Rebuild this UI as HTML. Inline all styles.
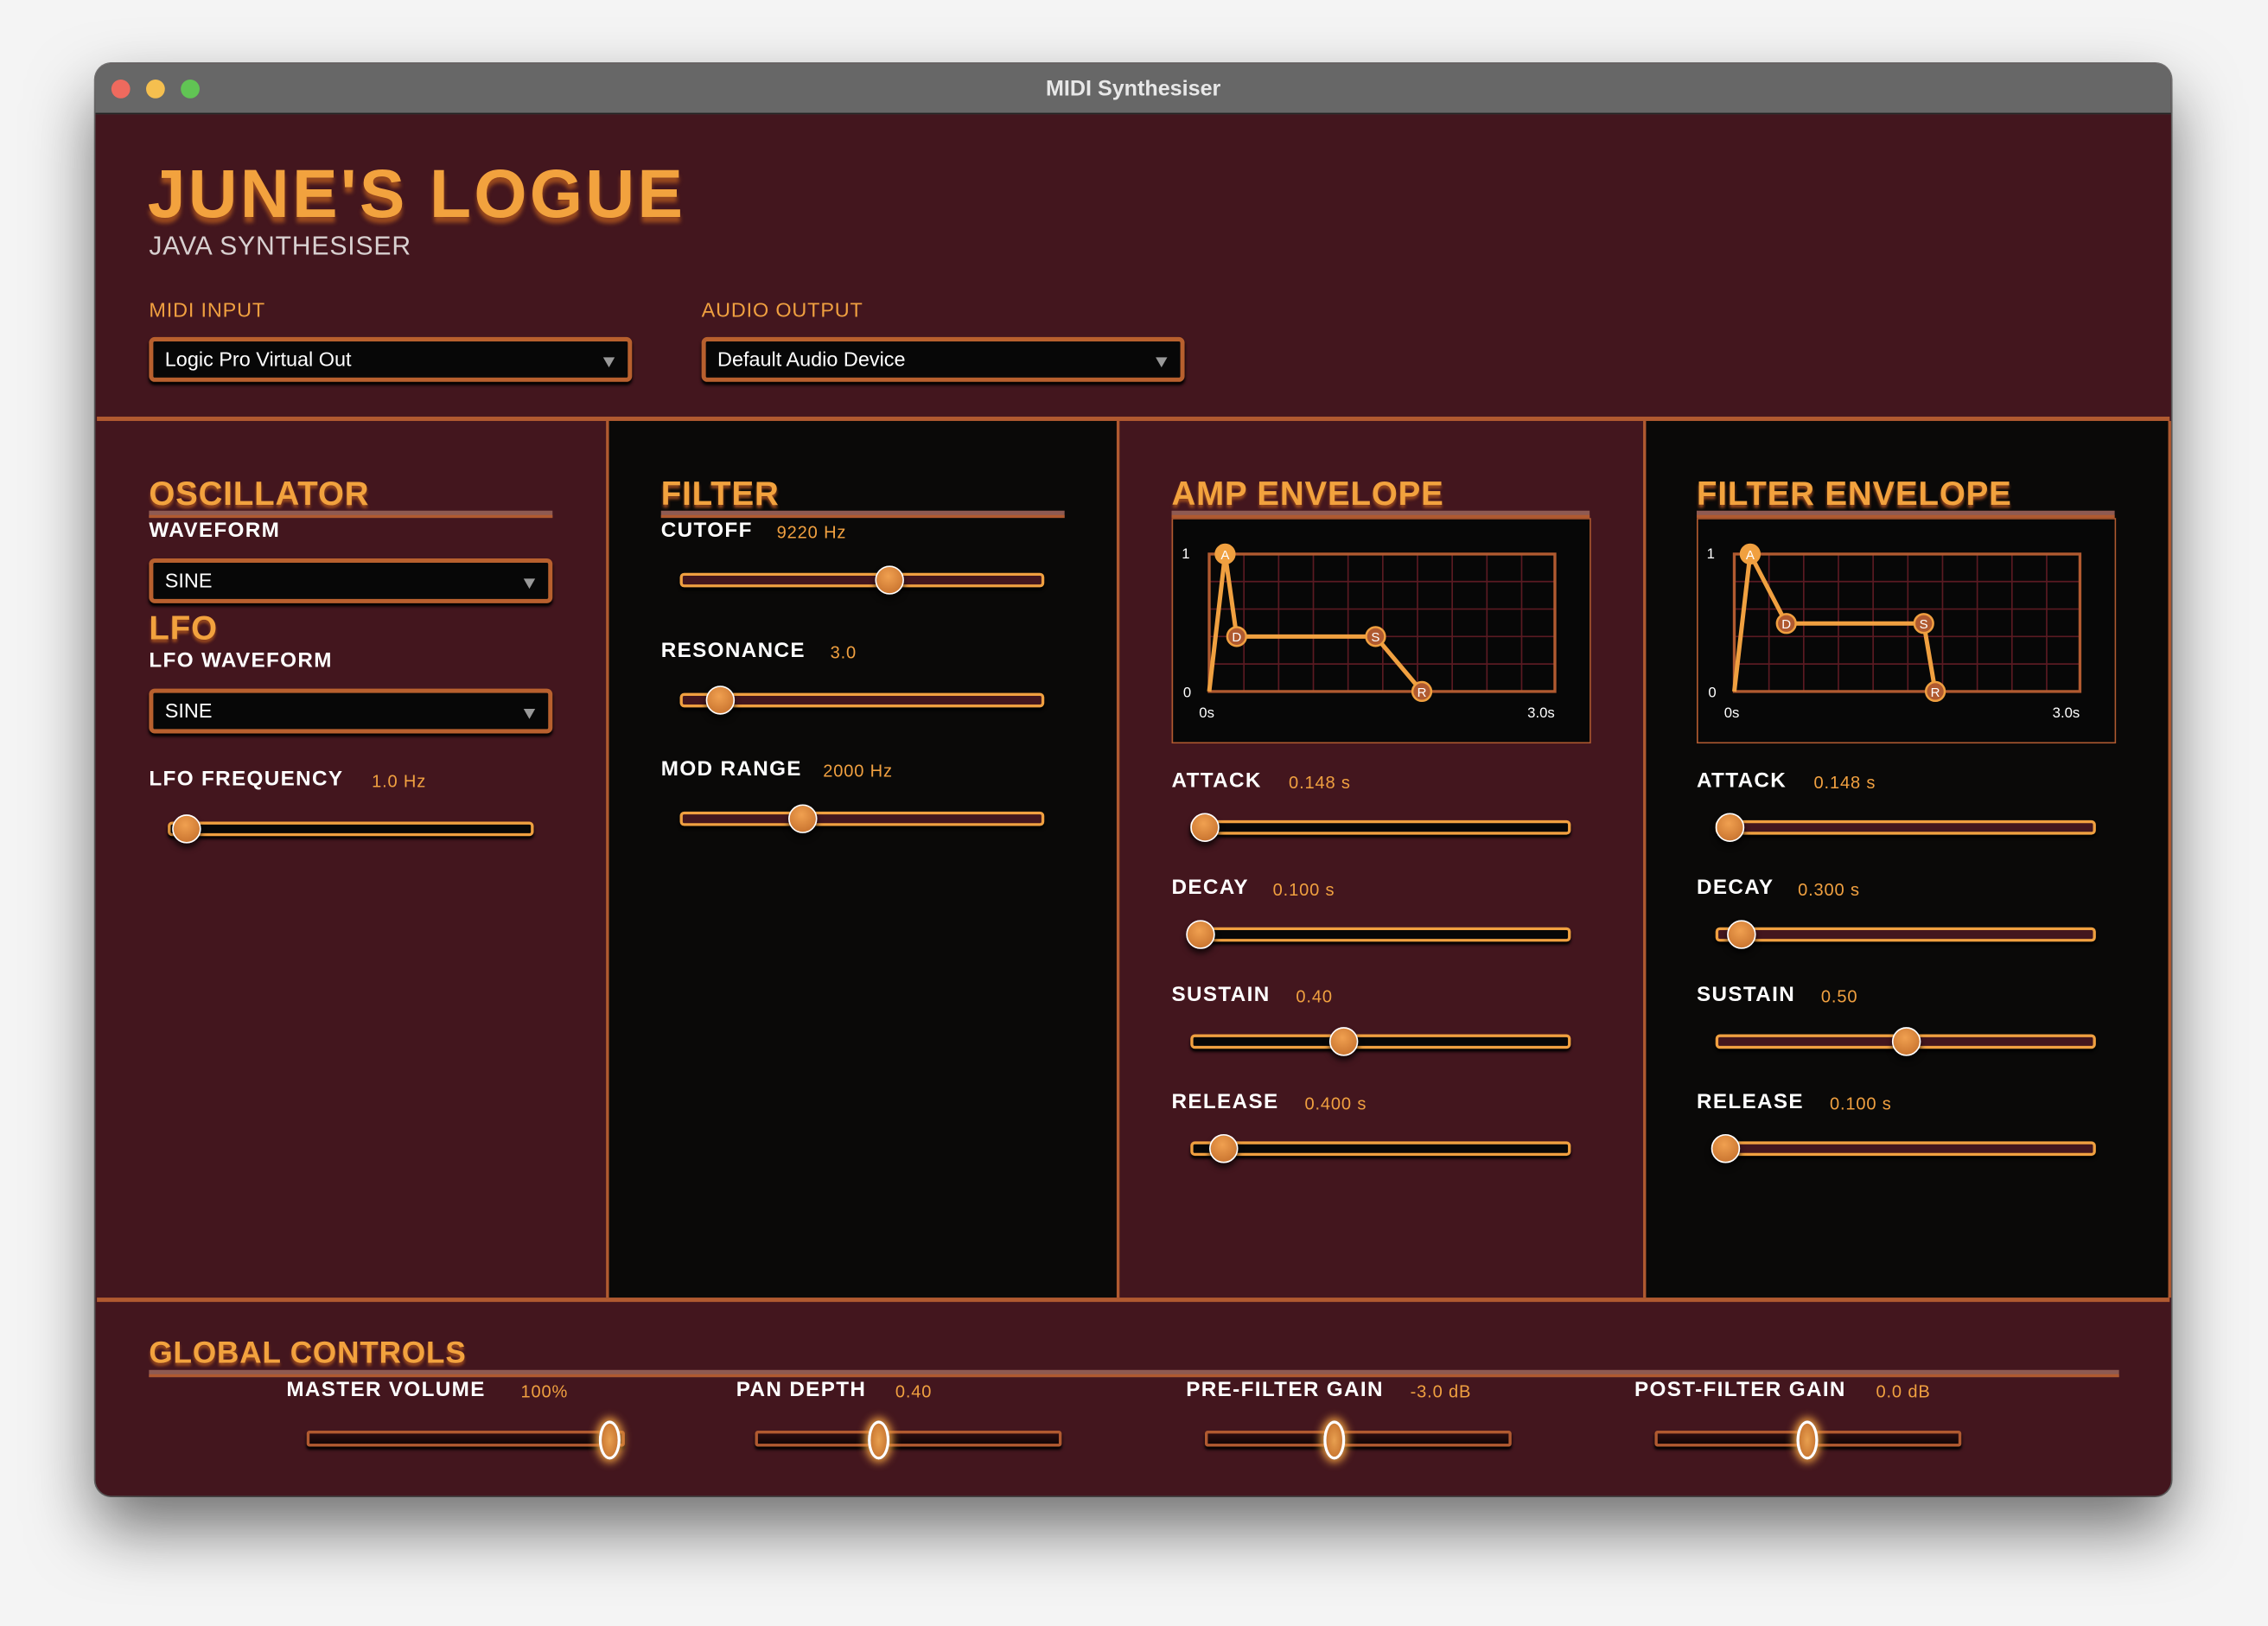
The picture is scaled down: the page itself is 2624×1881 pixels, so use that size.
<!DOCTYPE html>
<html><head><meta charset="utf-8"><style>
*{margin:0;padding:0;box-sizing:border-box}
html,body{width:2624px;height:1880px;overflow:hidden;background:#f4f4f4;font-family:"Liberation Sans",sans-serif}
#s{position:absolute;left:0;top:0;width:1568px;height:1124px;transform:scale(1.67347);transform-origin:0 0}
.a{position:absolute}
.win{left:66px;top:44px;width:1435px;height:990px;border-radius:11px;background:#43161e;overflow:hidden;box-shadow:0 22px 45px rgba(0,0,0,.55),0 0 0 1px rgba(0,0,0,.5)}
.tb{left:0;top:0;width:1435px;height:35px;background:#676767;border-bottom:1px solid #222}
.tl{width:13px;height:13px;border-radius:50%;top:11px}
.blk{background:#0a0908}
.ob{background:#b05a30}
.h{color:#f2a23e;font-weight:bold;font-size:23px;letter-spacing:.5px;text-shadow:0 2px 2px #9a4a1e;white-space:nowrap}
.ul{height:5px;background:#8e5a52;border-bottom:2px solid #b05a30}
.lb{color:#fff;font-weight:bold;font-size:14.5px;letter-spacing:.8px;white-space:nowrap}
.v{color:#f0a040;font-size:12px;letter-spacing:.5px;white-space:nowrap}
.dd{background:#070707;border:3px solid #b8602e;border-radius:4px;color:#fff;font-size:14px;padding-left:8px;line-height:25px;box-shadow:0 2px 2px #000}
.dd:after{content:"";position:absolute;right:9px;top:11px;border-left:4px solid transparent;border-right:4px solid transparent;border-top:7px solid #999}
.tr{height:10px;border:2px solid #f0a040;border-radius:3px;box-shadow:0 2px 2px #000}
.tr.k{background:#070707}.tr.m{background:#43161e}
.kn{width:20px;height:20px;border-radius:50%;background:radial-gradient(circle at 45% 35%,#f0a050,#c06a28);border:1.5px solid #fff;box-shadow:0 3px 4px rgba(0,0,0,.7)}
.gt{height:11px;border:2px solid #b05a30;border-radius:2px;background:linear-gradient(#2a0c0f,#120607);box-shadow:0 2px 2px #000}
.gk{width:15px;height:27px;border-radius:50%;background:radial-gradient(#e8a050,#c06a28);border:2px solid #fff;box-shadow:0 0 6px 2px #f0a040}
</style></head><body><div id="s">
<div class="a win">
 <div class="a tb"></div>
 <div class="a tl" style="left:11px;background:#ee6a5e"></div>
 <div class="a tl" style="left:35px;background:#f5bf4f"></div>
 <div class="a tl" style="left:59px;background:#61c454"></div>
 <div class="a" style="left:0;width:1435px;top:9px;text-align:center;color:#e8e8e8;font-weight:bold;font-size:15px">MIDI Synthesiser</div>
</div>
<div class="a h" style="left:102px;top:106px;font-size:47px;letter-spacing:2px;text-shadow:0 4px 3px #9a4a1e">JUNE'S LOGUE</div>
<div class="a" style="left:103px;top:160px;color:#d8d0d0;font-size:18px;letter-spacing:.5px">JAVA SYNTHESISER</div>
<div class="a v" style="left:103px;top:206px;font-size:14px">MIDI INPUT</div>
<div class="a v" style="left:485px;top:206px;font-size:14px">AUDIO OUTPUT</div>
<div class="a dd" style="left:103px;top:233px;width:334px;height:31px">Logic Pro Virtual Out</div>
<div class="a dd" style="left:485px;top:233px;width:334px;height:31px">Default Audio Device</div>
<div class="a ob" style="left:67px;top:288px;width:1433px;height:3px"></div>
<div class="a blk" style="left:421px;top:291px;width:351px;height:606px"></div>
<div class="a blk" style="left:1138px;top:291px;width:361px;height:606px"></div>
<div class="a ob" style="left:419px;top:291px;width:2px;height:606px"></div>
<div class="a ob" style="left:772px;top:291px;width:2px;height:606px"></div>
<div class="a ob" style="left:1136px;top:291px;width:2px;height:606px"></div>
<div class="a ob" style="left:1499px;top:291px;width:2px;height:606px"></div>
<div class="a ob" style="left:67px;top:897px;width:1433px;height:3px"></div>
<div class="a h" style="left:103px;top:328px">OSCILLATOR</div>
<div class="a ul" style="left:103px;top:353px;width:279px"></div>
<div class="a lb" style="left:103px;top:359px">WAVEFORM</div>
<div class="a dd" style="left:103px;top:386px;width:279px;height:31px">SINE</div>
<div class="a h" style="left:103px;top:421px">LFO</div>
<div class="a lb" style="left:103px;top:449px">LFO WAVEFORM</div>
<div class="a dd" style="left:103px;top:476px;width:279px;height:31px">SINE</div>
<div class="a lb" style="left:103px;top:531px">LFO FREQUENCY</div><div class="a v" style="left:257px;top:533px">1.0 Hz</div>
<div class="a tr k" style="left:116px;top:568px;width:253px"></div><div class="a kn" style="left:119px;top:563px"></div>
<div class="a h" style="left:457px;top:328px">FILTER</div>
<div class="a ul" style="left:457px;top:353px;width:279px"></div>
<div class="a lb" style="left:457px;top:359px">CUTOFF</div><div class="a v" style="left:537px;top:361px">9220 Hz</div>
<div class="a tr m" style="left:470px;top:396px;width:252px"></div><div class="a kn" style="left:605px;top:391px"></div>
<div class="a lb" style="left:457px;top:442px">RESONANCE</div><div class="a v" style="left:574px;top:444px">3.0</div>
<div class="a tr m" style="left:470px;top:479px;width:252px"></div><div class="a kn" style="left:488px;top:474px"></div>
<div class="a lb" style="left:457px;top:524px">MOD RANGE</div><div class="a v" style="left:569px;top:526px">2000 Hz</div>
<div class="a tr m" style="left:470px;top:561px;width:252px"></div><div class="a kn" style="left:545px;top:556px"></div>
<div class="a h" style="left:810px;top:328px">AMP ENVELOPE</div>
<div class="a ul" style="left:810px;top:353px;width:289px"></div>
<svg class="a" style="left:810px;top:358px" width="290" height="156" viewBox="0 0 290 156">
<rect x="0.5" y="0.5" width="289" height="155" fill="#070707" stroke="#b05a30"/>
<g stroke="#5a1a22" stroke-width="1"><path d="M50 25V120M74 25V120M98 25V120M122 25V120M146 25V120M170 25V120M194 25V120M218 25V120M242 25V120M26 44H265M26 63H265M26 82H265M26 101H265"/></g>
<rect x="26" y="25" width="239" height="95" fill="none" stroke="#b05a30" stroke-width="2"/>
<g fill="#fff" font-size="10" font-family="Liberation Sans"><text x="7" y="28">1</text><text x="8" y="124">0</text><text x="19" y="138">0s</text><text x="246" y="138">3.0s</text></g>
<polyline points="26,120 37,25 45,82 141,82 173,120" fill="none" stroke="#f0a040" stroke-width="3"/>
<g stroke="#f0a040" stroke-width="1.5" font-size="9" font-family="Liberation Sans" text-anchor="middle" fill="#fff">
<circle cx="37" cy="25" r="6.5" fill="#f0a040"/><circle cx="45" cy="82" r="6.5" fill="#b05a30"/><circle cx="141" cy="82" r="6.5" fill="#b05a30"/><circle cx="173" cy="120" r="6.5" fill="#b05a30"/>
<g stroke="none"><text x="37" y="28.5">A</text><text x="45" y="85.5">D</text><text x="141" y="85.5">S</text><text x="173" y="123.5">R</text></g></g>
</svg>
<div class="a lb" style="left:810px;top:532px">ATTACK</div><div class="a v" style="left:891px;top:534px">0.148 s</div>
<div class="a tr k" style="left:823px;top:567px;width:263px"></div><div class="a kn" style="left:823px;top:562px"></div>
<div class="a lb" style="left:810px;top:606px">DECAY</div><div class="a v" style="left:880px;top:608px">0.100 s</div>
<div class="a tr k" style="left:823px;top:641px;width:263px"></div><div class="a kn" style="left:820px;top:636px"></div>
<div class="a lb" style="left:810px;top:680px">SUSTAIN</div><div class="a v" style="left:896px;top:682px">0.40</div>
<div class="a tr k" style="left:823px;top:715px;width:263px"></div><div class="a kn" style="left:919px;top:710px"></div>
<div class="a lb" style="left:810px;top:754px">RELEASE</div><div class="a v" style="left:902px;top:756px">0.400 s</div>
<div class="a tr k" style="left:823px;top:789px;width:263px"></div><div class="a kn" style="left:836px;top:784px"></div>
<div class="a h" style="left:1173px;top:328px">FILTER ENVELOPE</div>
<div class="a ul" style="left:1173px;top:353px;width:289px"></div>
<svg class="a" style="left:1173px;top:358px" width="290" height="156" viewBox="0 0 290 156">
<rect x="0.5" y="0.5" width="289" height="155" fill="#070707" stroke="#b05a30"/>
<g stroke="#5a1a22" stroke-width="1"><path d="M50 25V120M74 25V120M98 25V120M122 25V120M146 25V120M170 25V120M194 25V120M218 25V120M242 25V120M26 44H265M26 63H265M26 82H265M26 101H265"/></g>
<rect x="26" y="25" width="239" height="95" fill="none" stroke="#b05a30" stroke-width="2"/>
<g fill="#fff" font-size="10" font-family="Liberation Sans"><text x="7" y="28">1</text><text x="8" y="124">0</text><text x="19" y="138">0s</text><text x="246" y="138">3.0s</text></g>
<polyline points="26,120 37,25 62,73 157,73 165,120" fill="none" stroke="#f0a040" stroke-width="3"/>
<g stroke="#f0a040" stroke-width="1.5" font-size="9" font-family="Liberation Sans" text-anchor="middle" fill="#fff">
<circle cx="37" cy="25" r="6.5" fill="#f0a040"/><circle cx="62" cy="73" r="6.5" fill="#b05a30"/><circle cx="157" cy="73" r="6.5" fill="#b05a30"/><circle cx="165" cy="120" r="6.5" fill="#b05a30"/>
<g stroke="none"><text x="37" y="28.5">A</text><text x="62" y="76.5">D</text><text x="157" y="76.5">S</text><text x="165" y="123.5">R</text></g></g>
</svg>
<div class="a lb" style="left:1173px;top:532px">ATTACK</div><div class="a v" style="left:1254px;top:534px">0.148 s</div>
<div class="a tr m" style="left:1186px;top:567px;width:263px"></div><div class="a kn" style="left:1186px;top:562px"></div>
<div class="a lb" style="left:1173px;top:606px">DECAY</div><div class="a v" style="left:1243px;top:608px">0.300 s</div>
<div class="a tr m" style="left:1186px;top:641px;width:263px"></div><div class="a kn" style="left:1194px;top:636px"></div>
<div class="a lb" style="left:1173px;top:680px">SUSTAIN</div><div class="a v" style="left:1259px;top:682px">0.50</div>
<div class="a tr m" style="left:1186px;top:715px;width:263px"></div><div class="a kn" style="left:1308px;top:710px"></div>
<div class="a lb" style="left:1173px;top:754px">RELEASE</div><div class="a v" style="left:1265px;top:756px">0.100 s</div>
<div class="a tr m" style="left:1186px;top:789px;width:263px"></div><div class="a kn" style="left:1183px;top:784px"></div>
<div class="a h" style="left:103px;top:924px;font-size:21px">GLOBAL CONTROLS</div>
<div class="a ul" style="left:103px;top:947px;width:1362px;height:5px"></div>
<div class="a lb" style="left:198px;top:953px">MASTER VOLUME</div><div class="a v" style="left:360px;top:955px">100%</div>
<div class="a lb" style="left:509px;top:953px">PAN DEPTH</div><div class="a v" style="left:619px;top:955px">0.40</div>
<div class="a lb" style="left:820px;top:953px">PRE-FILTER GAIN</div><div class="a v" style="left:975px;top:955px">-3.0 dB</div>
<div class="a lb" style="left:1130px;top:953px">POST-FILTER GAIN</div><div class="a v" style="left:1297px;top:955px">0.0 dB</div>
<div class="a gt" style="left:212px;top:989px;width:220px"></div><div class="a gk" style="left:414px;top:982px"></div>
<div class="a gt" style="left:522px;top:989px;width:212px"></div><div class="a gk" style="left:600px;top:982px"></div>
<div class="a gt" style="left:833px;top:989px;width:212px"></div><div class="a gk" style="left:915px;top:982px"></div>
<div class="a gt" style="left:1144px;top:989px;width:212px"></div><div class="a gk" style="left:1242px;top:982px"></div>
</div></body></html>
